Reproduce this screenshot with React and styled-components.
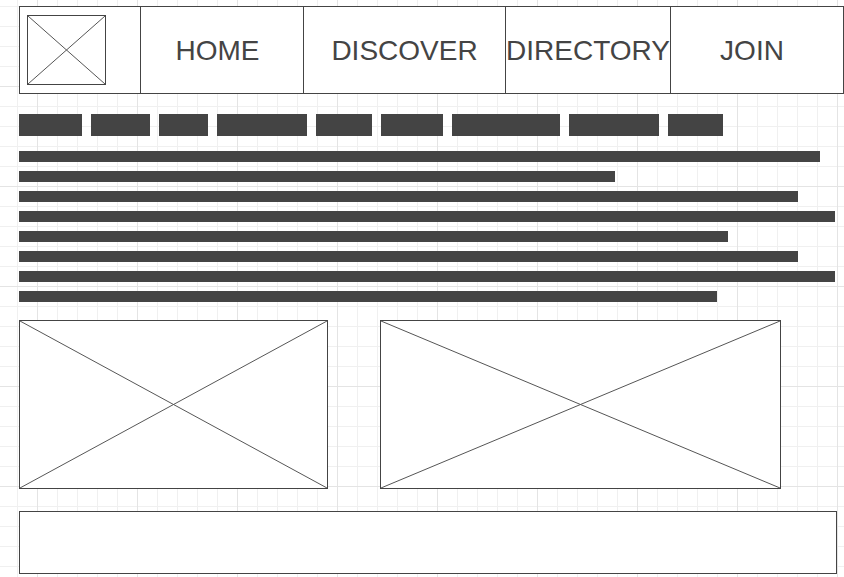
import styled, { createGlobalStyle } from "styled-components";

const GlobalStyle = createGlobalStyle`
  html, body {
    margin: 0;
    padding: 0;
  }
  body {
    min-height: 100vh;
    font-family: "Liberation Sans", Arial, sans-serif;
    background-color: #fff;
    background-image:
      linear-gradient(to right, #e4e4e4 1px, transparent 1px),
      linear-gradient(to bottom, #e4e4e4 1px, transparent 1px),
      linear-gradient(to right, #f0f0f0 1px, transparent 1px),
      linear-gradient(to bottom, #f0f0f0 1px, transparent 1px);
    background-size: 100px 100px, 100px 100px, 20px 20px, 20px 20px;
    background-position: 37px 86px, 37px 86px, 17px 6px, 17px 6px;
  }
`;

const ink = "#444";

const Page = styled.div`
  padding: 6px 0 0 19px;
  display: flex;
  flex-direction: column;
  align-items: flex-start;
`;

const Header = styled.header`
  box-sizing: border-box;
  display: flex;
  width: 825px;
  height: 88px;
  border: 1px solid ${ink};
  background: #fff;
`;

const LogoCell = styled.div`
  width: 120px;
  padding: 8px 0 0 7px;
  box-sizing: border-box;
`;

const NavItem = styled.div`
  box-sizing: border-box;
  width: ${(p) => p.$w}px;
  border-left: 1px solid ${ink};
  display: flex;
  align-items: center;
  justify-content: center;
  font-size: 28px;
  color: ${ink};
  white-space: nowrap;
  overflow: visible;
  padding-top: 1px;
  padding-right: ${(p) => p.$shift || 0}px;
`;

const Tags = styled.div`
  display: flex;
  gap: 9px;
  margin-top: 20px;
`;

const Tag = styled.div`
  width: ${(p) => p.$w}px;
  height: 22px;
  background: ${ink};
`;

const Lines = styled.div`
  display: flex;
  flex-direction: column;
  gap: 9px;
  margin-top: 15px;
`;

const Line = styled.div`
  width: ${(p) => p.$w}px;
  height: 11px;
  background: ${ink};
`;

const Media = styled.div`
  display: flex;
  gap: 52px;
  margin-top: 18px;
`;

const ImageBox = styled.div`
  box-sizing: border-box;
  width: ${(p) => p.$w}px;
  height: 169px;
  border: 1px solid ${ink};
  background: #fff;
  svg {
    display: block;
    width: 100%;
    height: 100%;
  }
`;

const Footer = styled.footer`
  box-sizing: border-box;
  width: 818px;
  height: 63px;
  margin-top: 22px;
  border: 1px solid ${ink};
  background: #fff;
`;

const Cross = () => (
  <svg viewBox="0 0 100 100" preserveAspectRatio="none">
    <line x1="0" y1="0" x2="100" y2="100" stroke="#555" strokeWidth="1" vectorEffect="non-scaling-stroke" />
    <line x1="100" y1="0" x2="0" y2="100" stroke="#555" strokeWidth="1" vectorEffect="non-scaling-stroke" />
  </svg>
);

const Logo = () => (
  <svg width="79" height="70" viewBox="0 0 79 70">
    <rect x="0.5" y="0.5" width="78" height="69" fill="#fff" stroke={ink} />
    <line x1="1" y1="1" x2="78" y2="69" stroke="#555" />
    <line x1="78" y1="1" x2="1" y2="69" stroke="#555" />
  </svg>
);

const nav = [
  ["HOME", 163, 9],
  ["DISCOVER", 202, 0],
  ["DIRECTORY", 165, 0],
  ["JOIN", 173, 10],
];

const tagWidths = [63, 59, 49, 90, 56, 62, 108, 90, 55];
const lineWidths = [801, 596, 779, 816, 709, 779, 816, 698];

export default function App() {
  return (
    <>
      <GlobalStyle />
      <Page>
        <Header>
          <LogoCell>
            <Logo />
          </LogoCell>
          {nav.map(([label, w, shift]) => (
            <NavItem key={label} $w={w} $shift={shift}>{label}</NavItem>
          ))}
        </Header>
        <Tags>
          {tagWidths.map((w, i) => <Tag key={i} $w={w} />)}
        </Tags>
        <Lines>
          {lineWidths.map((w, i) => <Line key={i} $w={w} />)}
        </Lines>
        <Media>
          <ImageBox $w={309}><Cross /></ImageBox>
          <ImageBox $w={401}><Cross /></ImageBox>
        </Media>
        <Footer />
      </Page>
    </>
  );
}
